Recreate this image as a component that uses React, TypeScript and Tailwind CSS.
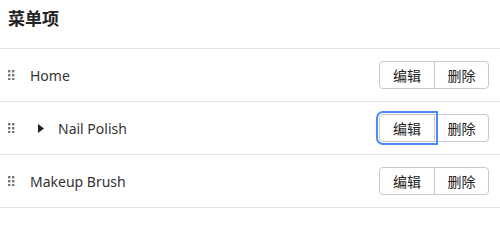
import React from "react";

function Handle() {
  return (
    <svg width="7" height="10" viewBox="0 0 7 10" className="shrink-0">
      {[0, 4, 8].map((y) =>
        [0, 4].map((x) => <rect key={`${x}-${y}`} x={x} y={y} width="2.4" height="2.4" fill="#777" />)
      )}
    </svg>
  );
}

function Caret() {
  return (
    <svg width="6" height="9" viewBox="0 0 6 9" className="shrink-0">
      <path d="M0 0 L6 4.5 L0 9 Z" fill="#222" />
    </svg>
  );
}

function Row({ label, caret, focus }: { label: string; caret?: boolean; focus?: boolean }) {
  return (
    <div className="flex h-[53px] items-center border-b border-[#e3e3e3] pl-[8px] pr-[11px]">
      <Handle />
      {caret ? (
        <div className="ml-[23px] flex items-center">
          <Caret />
          <span className="ml-[14px] text-[14px] text-[#333]">{label}</span>
        </div>
      ) : (
        <span className="ml-[15px] text-[14px] text-[#333]">{label}</span>
      )}
      <div className="ml-auto flex">
        <button
          className={`h-[28px] w-[56px] rounded-l-[4px] border border-[#c8c8c8] bg-white text-[14px] text-[#222] ${
            focus ? "relative z-10 outline-2 outline-offset-1 outline-[#4a8cf7] outline" : ""
          }`}
        >
          编辑
        </button>
        <button className="-ml-px h-[28px] w-[55px] rounded-r-[4px] border border-[#c8c8c8] bg-white text-[14px] text-[#222]">
          删除
        </button>
      </div>
    </div>
  );
}

export default function App() {
  return (
    <div
      className="h-[210px] w-[500px] overflow-hidden bg-white"
      style={{ fontFamily: '"Noto Sans", "Noto Sans CJK SC", sans-serif' }}
    >
      <div className="flex h-[49px] items-center border-b border-[#e3e3e3] pl-[8px] pb-[11px]">
        <h2 className="text-[17px] font-bold text-[#222]">菜单项</h2>
      </div>
      <Row label="Home" />
      <Row label="Nail Polish" caret focus />
      <Row label="Makeup Brush" />
    </div>
  );
}
